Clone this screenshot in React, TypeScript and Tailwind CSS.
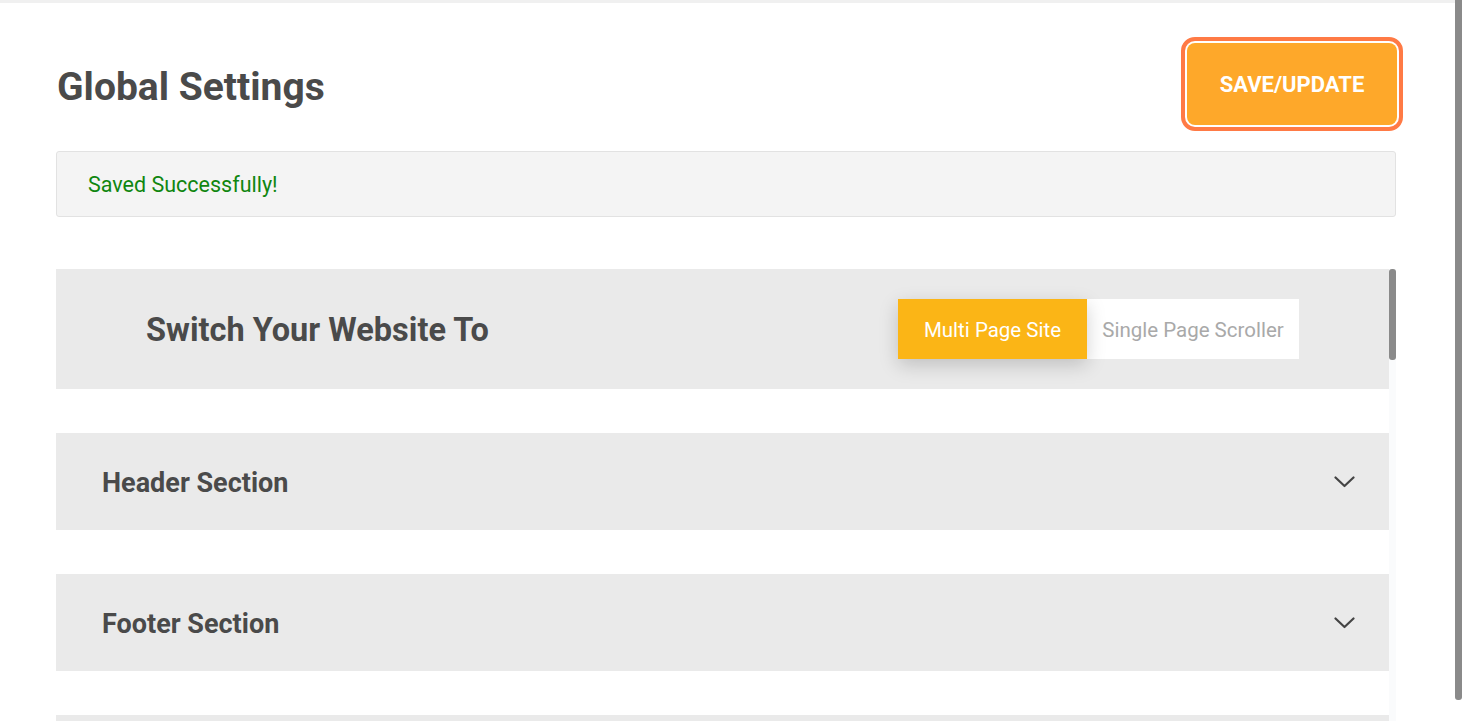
const sections = ["Header Section", "Footer Section", "Contact Section"];

function Chevron() {
  return (
    <svg width="21" height="12" viewBox="0 0 21 12" fill="none" className="text-[#444]">
      <path d="M1.5 1.5 L10.5 10 L19.5 1.5" stroke="currentColor" strokeWidth="2.2" strokeLinecap="round" strokeLinejoin="round" />
    </svg>
  );
}

function Toggle() {
  return (
    <div className="flex h-[60px]">
      <button className="w-[189px] bg-[#fbb516] text-white text-[20.5px] pt-[2px] shadow-[0_6px_18px_rgba(0,0,0,0.18)] relative z-10">
        Multi Page Site
      </button>
      <button className="w-[212px] bg-white text-[#a9a9a9] text-[20.5px] pt-[2px]">
        Single Page Scroller
      </button>
    </div>
  );
}

export default function App() {
  return (
    <div className="h-[721px] flex bg-white overflow-hidden font-['Roboto',sans-serif]">
      <div className="flex-1 flex flex-col">
        <div className="h-[3px] bg-[#f0f0f0]" />
        {/* Page header */}
        <div className="flex items-center justify-between pl-[57px] pr-[58px] pt-[40px]">
          <h1 className="text-[39px] font-bold text-[#4a4a4a] mt-[6px]">Global Settings</h1>
          <button className="w-[210px] h-[82px] rounded-[8px] bg-[#fea82a] text-white text-[22px] font-bold outline-4 outline-offset-2 outline-[#ff7a45]">
            SAVE/UPDATE
          </button>
        </div>

        {/* Alert */}
        <div className="ml-[56px] mr-[59px] mt-[26px] h-[66px] flex items-center pl-[31px] pt-[2px] bg-[#f4f4f4] border border-[#e2e2e2] rounded-[3px] text-[#0f860f] text-[21.5px]">
          Saved Successfully!
        </div>

        {/* Scroll area */}
        <div className="ml-[56px] mr-[59px] mt-[52px] flex-1 flex overflow-hidden">
          <div className="flex-1 flex flex-col gap-[44px]">
            <div className="h-[120px] shrink-0 bg-[#eaeaea] flex items-center justify-between pl-[90px] pr-[90px]">
              <h2 className="text-[32.5px] font-bold text-[#4a4a4a] pt-[3px]">Switch Your Website To</h2>
              <Toggle />
            </div>
            {sections.map((s) => (
              <div key={s} className="h-[97px] shrink-0 bg-[#eaeaea] flex items-center justify-between pl-[46px] pr-[34px]">
                <h3 className="text-[27px] font-bold text-[#4a4a4a] pt-[3px]">{s}</h3>
                <Chevron />
              </div>
            ))}
          </div>
          <div className="w-[7px] bg-[#fafbfc] flex flex-col">
            <div className="h-[91px] bg-[#8a8a8a] rounded-[3px]" />
          </div>
        </div>
      </div>

      {/* Window scrollbar */}
      <div className="w-[7px] flex flex-col">
        <div className="h-[700px] bg-[#8a8a8a] rounded-b-[3px]" />
      </div>
    </div>
  );
}
